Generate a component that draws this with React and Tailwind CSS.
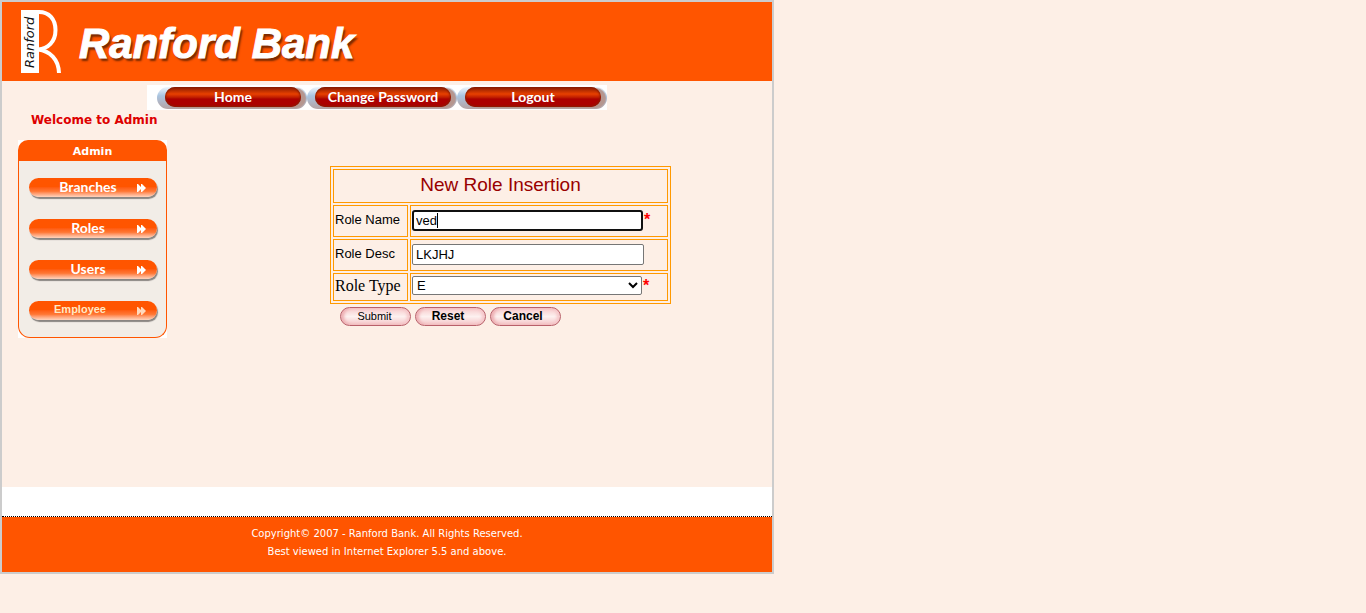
import React from "react";

const navItems = ["Home", "Change Password", "Logout"];
const menuItems = ["Branches", "Roles", "Users"];

function Logo() {
  return (
    <svg width="42" height="64" viewBox="0 0 42 64" role="img" aria-label="Ranford logo">
      <rect x="1" y="0" width="18" height="63" fill="#fff" />
      <path
        d="M17 2H19C29 2 35.500 9 35.500 20C35.500 32 28 38.500 18 39.500C30 41 38.500 49 39 63"
        fill="none"
        stroke="#fff"
        strokeWidth="4"
      />
      <text
        transform="translate(14 58) rotate(-90)"
        fontFamily="'DejaVu Sans', Verdana, sans-serif"
        fontSize="13"
        fontStyle="italic"
        fill="#111"
      >
        Ranford
      </text>
    </svg>
  );
}

function Arrows({ fill }) {
  return (
    <svg width="10" height="8" viewBox="0 0 10 8" fill={fill} aria-hidden="true">
      <path d="M0 0H1L4 3V0H5L9 4L5 8H4V5L1 8H0Z" />
    </svg>
  );
}

function NavLink({ label }) {
  return (
    <li className="flex h-[25px] w-[150px] pt-[2px]">
      <a
        href="#"
        className="flex h-[22px] w-[150px] rounded-full bg-linear-to-b from-[#eef5fc] via-[#a9c4e0] via-40% to-[#b5a3a3] pl-2"
      >
        <span className="flex h-5 w-[136px] items-center justify-center rounded-full bg-linear-to-b from-[#8a1c00] via-[#e84000] via-35% to-[#ac0000] to-60% pb-px font-['Lato',sans-serif] text-sm font-bold text-white shadow-[inset_0_0_2px_1px_#8a1c00,5px_1px_1px_#b5968f]">
          {label}
        </span>
      </a>
    </li>
  );
}

function MenuLink({ label, soft }) {
  return (
    <li>
      <a
        href="#"
        className="relative flex h-[19px] w-32 items-center rounded-full bg-linear-to-b from-[#ff5500] from-45% via-[#ff7733] via-70% to-[#ffd3bd] shadow-[1px_2px_1px_#8a8582]"
      >
        {soft ? (
          <span className="w-[102px] pb-[2px] text-center text-[11px] font-bold text-[#ffe9c4]">{label}</span>
        ) : (
          <span className="w-[118px] pb-px text-center font-['Lato',sans-serif] text-sm font-bold text-white">
            {label}
          </span>
        )}
        <span className="absolute right-[10px]">
          <Arrows fill={soft ? "#ffd9bd" : "#fff"} />
        </span>
      </a>
    </li>
  );
}

function PillButton({ children, type, bold }) {
  return (
    <button
      type={type}
      className={
        "h-[19px] w-[71px] rounded-full border border-[#b8606a] bg-linear-to-b from-[#f6c9ca] via-[#fdf1f0] via-50% to-[#f3c4c6] leading-4 text-black shadow-[inset_3px_0_3px_#eeb0b4,inset_-3px_0_3px_#f6c9cb] " +
        (bold ? "pr-[5px] pb-px text-xs font-bold" : "pr-[2px] pb-px text-[11px] font-normal")
      }
    >
      {children}
    </button>
  );
}

function Required() {
  return <span className="pl-px text-base leading-5 font-bold text-[#ff0000]">*</span>;
}

export default function App() {
  const cell = "border border-[#ff9900] px-px pt-px pb-[3px]";
  return (
    <div className="min-h-screen bg-[#fdefe6] font-['Liberation_Sans',Arial,sans-serif]">
      <div className="w-full max-w-[774px] border-2 border-[#cccccc]">
        <header className="flex h-[79px] items-start bg-[#ff5500] pt-2 pl-[18px]">
          <Logo />
          <h1 className="mt-2 ml-[17px] text-[42px] leading-[52px] font-bold text-white italic [-webkit-text-stroke:1px_white] [text-shadow:2px_3px_2px_#7a2a00]">
            Ranford Bank
          </h1>
        </header>

        <main className="min-h-[406px] pt-1">
          <nav className="ml-[145px] w-[460px] bg-white pl-[10px]">
            <ul className="flex">
              {navItems.map((label) => (
                <NavLink key={label} label={label} />
              ))}
            </ul>
          </nav>

          <div className="flex items-start">
            <aside className="ml-4 w-[149px]">
              <p className="pl-[13px] font-['DejaVu_Sans',Verdana,sans-serif] text-xs leading-5 font-bold whitespace-nowrap text-[#dd0000]">
                Welcome to Admin
              </p>
              <section className="mt-[10px] bg-white">
                <h2 className="h-[21px] rounded-t-[10px] bg-[#ff5500] text-center font-['DejaVu_Sans',Verdana,sans-serif] text-[11px] leading-6 font-bold text-white">
                  Admin
                </h2>
                <ul className="flex h-[177px] flex-col gap-[22px] rounded-b-xl border border-t-0 border-[#ff5500] bg-[#f2ede7] pt-[17px] pl-[10px]">
                  {menuItems.map((label) => (
                    <MenuLink key={label} label={label} />
                  ))}
                  <MenuLink label="Employee" soft />
                </ul>
              </section>
            </aside>

            <form className="mt-14 ml-[163px]" onSubmit={(e) => e.preventDefault()}>
              <table className="w-[341px] table-fixed border-separate border-spacing-[2px] border border-[#ff9900] text-[13px] text-black">
                <colgroup>
                  <col className="w-[75px]" />
                  <col />
                </colgroup>
                <thead>
                  <tr className="h-[34px]">
                    <th colSpan={2} className={cell + " text-[19px] leading-7 font-normal text-[#990000]"}>
                      New Role Insertion
                    </th>
                  </tr>
                </thead>
                <tbody>
                  <tr className="h-8">
                    <td className={cell}>
                      <label htmlFor="role-name">Role Name</label>
                    </td>
                    <td className={cell}>
                      <div className="relative flex items-start">
                        <input
                          id="role-name"
                          type="text"
                          defaultValue="ved"
                          className="h-[21px] w-[231px] rounded-[3px] border-2 border-[#101010] bg-white px-[2px] text-[13px] outline-none"
                        />
                        <span className="absolute top-[3px] left-[25px] h-[15px] w-px bg-black" />
                        <Required />
                      </div>
                    </td>
                  </tr>
                  <tr className="h-8">
                    <td className={cell}>
                      <label htmlFor="role-desc">Role Desc</label>
                    </td>
                    <td className={cell}>
                      <input
                        id="role-desc"
                        type="text"
                        defaultValue="LKJHJ"
                        className="block h-[21px] w-[232px] rounded-[2px] border border-[#767676] bg-white px-[3px] text-[13px]"
                      />
                    </td>
                  </tr>
                  <tr className="h-7">
                    <td className={cell}>
                      <label
                        htmlFor="role-type"
                        className="font-['Liberation_Serif','Times_New_Roman',serif] text-base leading-5"
                      >
                        Role Type
                      </label>
                    </td>
                    <td className={cell}>
                      <div className="flex items-start">
                        <select
                          id="role-type"
                          defaultValue="E"
                          className="h-[19px] w-[230px] rounded-[2px] border border-[#767676] bg-white text-[13px] leading-4"
                        >
                          <option>E</option>
                        </select>
                        <Required />
                      </div>
                    </td>
                  </tr>
                </tbody>
              </table>
              <div className="mt-[3px] ml-[10px] flex gap-1">
                <PillButton type="submit">Submit</PillButton>
                <PillButton type="reset" bold>
                  Reset
                </PillButton>
                <PillButton type="button" bold>
                  Cancel
                </PillButton>
              </div>
            </form>
          </div>
        </main>

        <footer>
          <div className="h-[30px] border-b border-dotted border-black bg-white" />
          <div className="bg-[#ff5500] pt-2 pb-[11px] text-center font-['DejaVu_Sans',Verdana,sans-serif] text-[10px] leading-[18px] text-white">
            <p>Copyright© 2007 - Ranford Bank. All Rights Reserved.</p>
            <p>Best viewed in Internet Explorer 5.5 and above.</p>
          </div>
        </footer>
      </div>
    </div>
  );
}
